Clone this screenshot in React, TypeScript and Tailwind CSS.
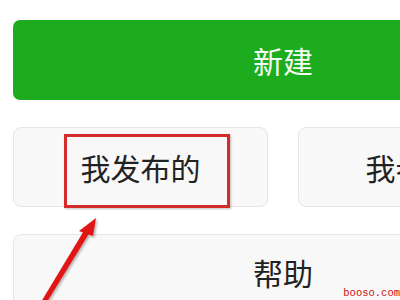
import React from "react";

export default function App() {
  const font = { fontFamily: '"Noto Sans CJK SC", "Noto Sans", sans-serif' };
  return (
    <div className="relative w-[400px] h-[300px] overflow-hidden bg-white" style={font}>
      <div className="w-[566px] pl-[13px] pt-[20px] flex flex-col gap-[27px]">
        <div className="w-[540px] h-[80px] rounded-[7px] bg-[#1cac1e] flex items-center justify-center text-[30px] text-[#f4fbf2] leading-none">
          新建
        </div>
        <div className="w-[540px] flex gap-[30px]">
          <div className="w-[255px] h-[80px] rounded-[8px] bg-[#f8f8f8] border border-[#e6e6e6] flex items-center justify-center text-[30px] text-[#222] leading-none">
            我发布的
          </div>
          <div className="w-[255px] h-[80px] rounded-[8px] bg-[#f8f8f8] border border-[#e6e6e6] flex items-center justify-center text-[30px] text-[#222] leading-none">
            我参与的
          </div>
        </div>
        <div className="w-[540px] h-[80px] rounded-[8px] bg-[#f8f8f8] border border-[#e6e6e6] flex justify-center text-[30px] text-[#222] leading-none pt-[22px] items-start">
          帮助
        </div>
      </div>

      <div className="absolute left-[64px] top-[134px] w-[166px] h-[74px] border-[3px] border-[#d42b2b] shadow-[1px_1px_2px_rgba(0,0,0,0.25)]" />

      <svg className="absolute left-0 top-0" width="400" height="300" viewBox="0 0 400 300">
        <defs>
          <filter id="sh" x="-20%" y="-20%" width="140%" height="140%">
            <feDropShadow dx="1.5" dy="1.5" stdDeviation="1" floodColor="#000" floodOpacity="0.3" />
          </filter>
        </defs>
        <g filter="url(#sh)" fill="#e01818">
          <polygon points="41,302 47,302 90,232 85,229" />
          <polygon points="96,218 79,231 93,236" />
        </g>
      </svg>

      <div
        className="absolute right-0 bottom-[2px] text-[10.5px] leading-none text-[#cc1111]"
        style={{ fontFamily: '"Liberation Mono", monospace' }}
      >
        booso.com
      </div>
    </div>
  );
}
